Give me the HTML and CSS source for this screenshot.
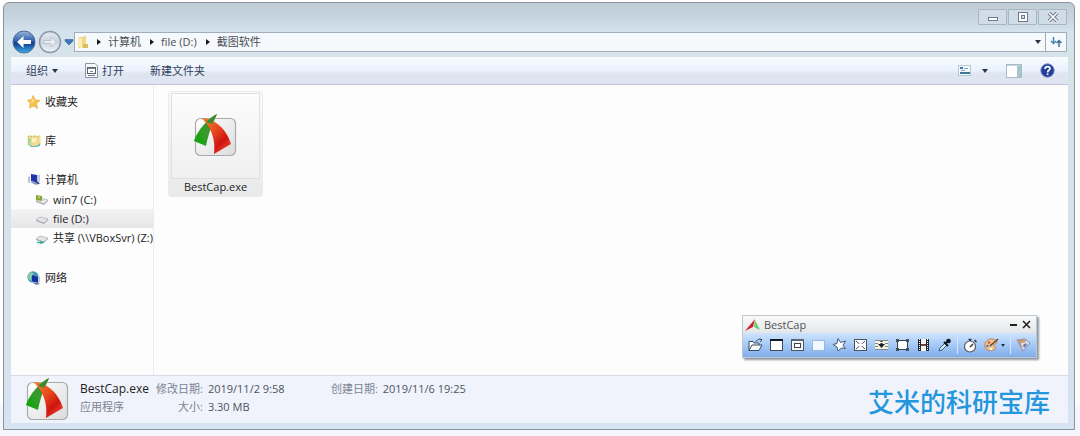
FILE: index.html
```html
<!DOCTYPE html>
<html lang="zh-CN">
<head>
  <meta charset="UTF-8">
  <title>截图软件</title>
  <link rel="stylesheet" href="styles.css">
</head>
<body>
  <!-- 公用图标 -->
  <svg class="defs" width="0" height="0" aria-hidden="true">
    <defs>
      <linearGradient id="green" x1="1" y1="0" x2="0" y2="1">
        <stop offset="0" stop-color="#197a1d"/>
        <stop offset=".5" stop-color="#3c9a30"/>
        <stop offset="1" stop-color="#00a800"/>
      </linearGradient>
      <linearGradient id="red" x1="0" y1="0" x2=".8" y2="1">
        <stop offset="0" stop-color="#f08a35"/>
        <stop offset=".45" stop-color="#e8481c"/>
        <stop offset=".75" stop-color="#cf1410"/>
        <stop offset="1" stop-color="#ee4a2c"/>
      </linearGradient>
      <linearGradient id="tile" x1="0" y1="0" x2="1" y2="1">
        <stop offset="0" stop-color="#fff"/>
        <stop offset="1" stop-color="#dcdcdc"/>
      </linearGradient>
      <linearGradient id="ball" x1="0" y1="0" x2="0" y2="1">
        <stop offset="0" stop-color="#9db6da"/>
        <stop offset=".45" stop-color="#2f5fae"/>
        <stop offset=".55" stop-color="#12398e"/>
        <stop offset="1" stop-color="#3cb4ee"/>
      </linearGradient>
      <linearGradient id="grayball" x1="0" y1="0" x2="0" y2="1">
        <stop offset="0" stop-color="#e3eaf1"/>
        <stop offset=".5" stop-color="#cbd5df"/>
        <stop offset="1" stop-color="#eef3f7"/>
      </linearGradient>
      <symbol id="logo" viewBox="0 0 44 44">
        <rect x="1.500" y="4.500" width="40" height="37" rx="5" fill="url(#tile)" stroke="#a9abad" stroke-width="1.200"/>
        <path d="M23 0C14 5 4 15 0 27L12 32C14 22 17 12 23 0Z" fill="url(#green)"/>
        <path d="M7 4C21 4 33 16 37 30L20 40C22 26 17 12 7 4Z" fill="url(#red)"/>
        <path d="M23 0C19 2 15 5 12 8L18 10Z" fill="#3f8a2c"/>
      </symbol>
      <symbol id="drive" viewBox="0 0 14 12">
        <path d="M1 7L5 4L13 6L9 10Z" fill="#e3e5e7" stroke="#aeb2b5" stroke-width=".8"/>
        <path d="M1 7V8L9 11L13 7V6L9 10Z" fill="#a4a8ac"/>
      </symbol>
    </defs>
  </svg>

  <main class="window">
    <header class="titlebar">
      <button class="win-btn" aria-label="最小化">
        <svg width="12" height="10" viewBox="0 0 12 10"><rect x="1.500" y="5.500" width="9" height="3" fill="#fff" stroke="#70798a"/></svg>
      </button>
      <button class="win-btn" aria-label="最大化">
        <svg width="12" height="10" viewBox="0 0 12 10"><rect x="1.500" y=".5" width="9" height="9" fill="#fff" stroke="#70798a"/><rect x="4.500" y="3.500" width="3" height="3" fill="#d5dde8" stroke="#70798a"/></svg>
      </button>
      <button class="win-btn" aria-label="关闭">
        <svg width="12" height="10" viewBox="0 0 12 10"><path d="M2 1L10 9M10 1L2 9" stroke="#70798a" stroke-width="3.600"/><path d="M2 1L10 9M10 1L2 9" stroke="#fff" stroke-width="1.700"/></svg>
      </button>
    </header>

    <!-- 地址栏 -->
    <div class="address-row">
      <div class="nav-buttons">
        <button aria-label="后退">
          <svg width="24" height="24" viewBox="0 0 24 24"><circle cx="12" cy="12" r="11" fill="url(#ball)" stroke="#4e6a94"/><path d="M5 12L11.500 6V10H19V14H11.500V18Z" fill="#fff"/></svg>
        </button>
        <button aria-label="前进">
          <svg width="24" height="24" viewBox="0 0 24 24"><circle cx="12" cy="12" r="10.500" fill="url(#grayball)" stroke="#8f9aa8" stroke-width="1.500"/><path d="M18.500 12L13 7V10.500H6V13.500H13V17Z" fill="#e9eef3" stroke="#b3bec9" stroke-width=".8"/></svg>
        </button>
        <button aria-label="最近浏览的位置">
          <svg width="10" height="8" viewBox="0 0 10 8"><path d="M1 1.500H9V3L5 7L1 3Z" fill="#3e77b8" stroke="#4a6f9e" stroke-width=".7"/></svg>
        </button>
      </div>
      <nav class="address">
        <svg width="11" height="14" viewBox="0 0 11 14"><path d="M1 2H6L7 1H9V9L11 10V13H1Z" fill="#f0d787"/><path d="M1 2L5 4V13L1 12Z" fill="#fbeeb5"/><path d="M6 9H11V13H6Z" fill="#dcbc62"/></svg>
        <span class="sep"></span>
        <a href="#">计算机</a>
        <span class="sep"></span>
        <a href="#">file (D:)</a>
        <span class="sep"></span>
        <a href="#">截图软件</a>
        <button class="history" aria-label="上一个位置"><span class="caret"></span></button>
        <button class="refresh" aria-label="刷新">
          <svg width="14" height="12" viewBox="0 0 14 12"><path d="M4.500 1V7M2 5L4.500 7.500L7 5" fill="none" stroke="#4d87ad" stroke-width="1.500"/><path d="M10 11V5M7.500 7L10 4.500L12.500 7" fill="none" stroke="#3a719d" stroke-width="1.500"/></svg>
        </button>
      </nav>
    </div>

    <!-- 工具栏 -->
    <div class="toolbar">
      <button class="organize">组织<span class="caret"></span></button>
      <button class="open">
        <svg width="13" height="15" viewBox="0 0 13 15"><path d="M.5 .5H10L12.500 3V14.500H.5Z" fill="#f6f8fb" stroke="#8a94a2"/><rect x="2.500" y="4.500" width="8" height="6" fill="#fff" stroke="#59636f"/><path d="M3 5.500H10M5 8.500H8M3 12.500H10" stroke="#7a8490"/></svg>
        打开
      </button>
      <button>新建文件夹</button>
      <button class="view" aria-label="更改视图">
        <svg width="14" height="11" viewBox="0 0 14 11"><rect x=".5" y=".5" width="12" height="10" fill="#f4fafc" stroke="#b5c9d4"/><path d="M2 3H5M2 8H12" stroke="#3d779b" stroke-width="2"/><path d="M6 3.500H10M3 5.500H7" stroke="#86a9be"/></svg>
        <span class="caret"></span>
      </button>
      <button aria-label="预览窗格">
        <svg width="16" height="14" viewBox="0 0 16 14"><rect x=".5" y=".5" width="15" height="13" fill="#fff" stroke="#a9bcc6"/><path d="M11 1H15V13H11Z" fill="#a6c4cc"/><path d="M1 1.500H15" stroke="#c5d6dd"/></svg>
      </button>
      <button aria-label="帮助">
        <svg width="15" height="15" viewBox="0 0 15 15"><circle cx="7.500" cy="7.500" r="6.700" fill="#233d9c" stroke="#7c8ec6"/><path d="M5 6C5 2.800 10 2.800 10 5.600C10 7.400 7.600 7.200 7.600 9.400M7.600 10.600V12" fill="none" stroke="#fff" stroke-width="1.700"/></svg>
      </button>
    </div>

    <div class="content">
      <!-- 导航窗格 -->
      <aside class="sidebar">
        <a class="node" href="#">
          <svg width="14" height="14" viewBox="0 0 14 14"><path d="M6 .5L8 4.800L13 5.500L9.500 8.500L10.500 13.500L6.500 11L2.500 12.800L3.200 8.500L.5 5.200L4.700 4.500Z" fill="#f8c34a" stroke="#e9a83a" stroke-width=".7"/><path d="M6 3L6.800 6L4 8Z" fill="#fff0b4"/></svg>
          收藏夹
        </a>
        <a class="node" href="#">
          <svg width="14" height="14" viewBox="0 0 14 14"><path d="M.5 2L3 1L5 2L8 1L10 2L13.500 1V11L10 12.500L5 13L.5 11Z" fill="#eddc91"/><path d="M1 4H4V11H1Z" fill="#a9d7a1"/><path d="M5 4H9V8H5Z" fill="#fff2bd"/><path d="M2 10C5 13 10 13 13 9V12L9 13H4Z" fill="#66b8c4"/><path d="M1 2.500H13" stroke="#b7a75c" stroke-dasharray="1 2"/></svg>
          库
        </a>
        <div class="group">
          <a class="node" href="#">
            <svg width="14" height="14" viewBox="0 0 14 14"><path d="M4 1L10 2V9L4 8Z" fill="#2136aa"/><path d="M10 2L13 1.500V9L10 9Z" fill="#c1cee4"/><path d="M1 4L3 3V10L1 9Z" fill="#b5c1d0"/><path d="M3 9L7 8L13 10L9 12Z" fill="#8995ba"/><path d="M6 7L10 9L12 11" fill="none" stroke="#2230a0" stroke-width="1.500"/></svg>
            计算机
          </a>
          <ul class="drives">
            <li><a href="#"><svg width="14" height="12" viewBox="0 0 14 12"><use href="#drive"/><path d="M1 1L7 2V7L1 6Z" fill="#7fa936"/><path d="M3 2L5 2.500V4.500L3 4Z" fill="#e3c06a"/></svg>win7 (C:)</a></li>
            <li class="selected"><a href="#"><svg width="14" height="12"><use href="#drive"/></svg>file (D:)</a></li>
            <li><a href="#"><svg width="14" height="12" viewBox="0 0 14 12"><use href="#drive"/><path d="M2 10.500H9M6 9V12" stroke="#3eae98" stroke-width="1.600"/></svg>共享 (\\VBoxSvr) (Z:)</a></li>
          </ul>
        </div>
        <a class="node" href="#">
          <svg width="14" height="14" viewBox="0 0 14 14"><circle cx="6" cy="6" r="5.700" fill="#4595bb"/><path d="M1 3L5 1L7 4L4 6L5 10L1 8Z" fill="#8ccca5"/><path d="M5 4L11 6V12L5 10Z" fill="#17309f"/><path d="M11 6L13 5V11L11 12Z" fill="#becbdc"/><path d="M6 12L10 11L13 13L9 14Z" fill="#77829f"/></svg>
          网络
        </a>
      </aside>

      <section class="files">
        <a class="file" href="#">
          <span class="thumb"><svg width="44" height="44"><use href="#logo"/></svg></span>
          <span>BestCap.exe</span>
        </a>

        <!-- 截图工具浮动窗 -->
        <div class="capture">
          <div class="capture-title">
            <svg width="15" height="12" viewBox="0 0 15 12"><path d="M10 0L8 8L0 12Z" fill="#cf2231"/><path d="M10 1L15 11L9 8Z" fill="#65ce65"/></svg>
            <span>BestCap</span>
            <button aria-label="最小化"><svg width="9" height="9" viewBox="0 0 9 9"><path d="M1 5H8" stroke="#222" stroke-width="2"/></svg></button>
            <button aria-label="关闭"><svg width="9" height="9" viewBox="0 0 9 9"><path d="M1 1L8 8M8 1L1 8" stroke="#222" stroke-width="1.600"/></svg></button>
          </div>
          <div class="capture-tools">
            <button aria-label="打开文件"><svg width="15" height="14" viewBox="0 0 15 14"><path d="M1 12.500V3.500H5L6 5H11V7M1 12.500L4 7H14L11 12.500Z" fill="#f7fafc" stroke="#3b4d60"/><path d="M8 4C9 1 12 1 14 2M11.500 .5L14 2L12 4" fill="none" stroke="#3b4d60"/></svg></button>
            <button aria-label="活动窗口"><svg width="15" height="14" viewBox="0 0 15 14"><rect x="1.500" y="1.500" width="12" height="11" fill="#fff" stroke="#3a4a5a"/><path d="M1 2H14" stroke="#101a24" stroke-width="2"/></svg></button>
            <button aria-label="窗口对象"><svg width="15" height="14" viewBox="0 0 15 14"><rect x="1.500" y="1.500" width="12" height="11" fill="#f7f7f7" stroke="#4b5665"/><path d="M1 2H14" stroke="#5c6570" stroke-width="2"/><rect x="4.500" y="5.500" width="6" height="4" fill="#fff" stroke="#38424e"/></svg></button>
            <button aria-label="矩形区域"><svg width="15" height="14" viewBox="0 0 15 14"><rect x="1.500" y="2.500" width="12" height="10" fill="#eff9ff" stroke="#6d93b0" stroke-dasharray="1 1"/></svg></button>
            <button aria-label="手绘区域"><svg width="15" height="14" viewBox="0 0 15 14"><path d="M6 .5L8.500 4.500L13.500 3L11 7.500L13.500 10.500L9.500 10L6 13L5 9L1 6.500L5 5.500Z" fill="#fff" stroke="#46596c"/></svg></button>
            <button aria-label="全屏"><svg width="15" height="14" viewBox="0 0 15 14"><rect x="1.500" y="1.500" width="12" height="11" fill="#fff" stroke="#455362"/><path d="M3 3L12 11M12 3L3 11" stroke="#4a5663"/><path d="M5 7L7.500 4.500L10 7L7.500 9.500Z" fill="#fff"/></svg></button>
            <button aria-label="滚动窗口"><svg width="15" height="14" viewBox="0 0 15 14"><path d="M1 2H14V12H1Z" fill="#f6f2dc"/><path d="M1 2.500H14M1 5.500H4M11 5.500H14M1 8.500H4M11 8.500H14M1 11.500H14" stroke="#7d868e"/><path d="M4 6H11L7.500 10Z" fill="#17222d"/><path d="M7.500 3V7" stroke="#17222d" stroke-width="2" stroke-dasharray="1 1"/></svg></button>
            <button aria-label="固定区域"><svg width="15" height="14" viewBox="0 0 15 14"><rect x="2.500" y="2.500" width="10" height="9" fill="#fff" stroke="#33424f"/><path d="M1 1H4V4H1ZM11 1H14V4H11ZM1 10H4V13H1ZM11 10H14V13H11Z" fill="#43525f"/></svg></button>
            <button aria-label="屏幕录像"><svg width="15" height="14" viewBox="0 0 15 14"><path d="M2 1H13V13H2Z" fill="#25292e"/><path d="M5 1H10V6H5ZM5 8H10V13H5Z" fill="#f5f5f5"/><path d="M3.500 1V13M11.500 1V13" stroke="#fff" stroke-dasharray="1 1"/><path d="M5 7H10" stroke="#b45d51"/></svg></button>
            <button aria-label="取色"><svg width="15" height="14" viewBox="0 0 15 14"><path d="M2 13L3 10L8 5L10 7L5 12Z" fill="#d8eaf2" stroke="#355d80"/><path d="M7 4L11 8M9 5L12 2" stroke="#11171e" stroke-width="2"/><circle cx="11.500" cy="3" r="2.300" fill="#11171e"/></svg></button>
            <span class="divider"></span>
            <button aria-label="延时"><svg width="15" height="15" viewBox="0 0 15 15"><circle cx="7" cy="8.500" r="5.500" fill="#fff" stroke="#53585e" stroke-width="1.200"/><path d="M5.500 1.500H8.500M7 1V3M7 9L10 6M11.500 2L13.500 4" stroke="#303840" stroke-width="1.500"/></svg></button>
            <button class="output" aria-label="输出"><svg width="15" height="14" viewBox="0 0 15 14"><path d="M7 1C3 1 0 5 1 9C2 13 8 14 11 11C13 9 9 9 10 7C11 5 13 6 13 4C12 2 10 1 7 1Z" fill="#f3c48f" stroke="#b98259"/><circle cx="5" cy="4.500" r="1.300" fill="#cf5142"/><circle cx="3.500" cy="8" r="1.300" fill="#4d7fb7"/><circle cx="7" cy="11" r="1.200" fill="#fff"/><path d="M14 1L6 8" stroke="#6b3e2c" stroke-width="1.500"/></svg><span class="caret"></span></button>
            <span class="divider"></span>
            <button aria-label="设置"><svg width="15" height="14" viewBox="0 0 15 14"><path d="M1 2L9 1L14 5L7 13Z" fill="#d9e1ef" stroke="#8e8aa6"/><path d="M1 2L9 1L10 4L5 5L7 13Z" fill="#c69a78"/><path d="M7 7L10 5L11 7L8 10Z" fill="#6776b5"/></svg></button>
          </div>
        </div>
      </section>
    </div>

    <!-- 细节窗格 -->
    <footer class="details">
      <svg width="44" height="44"><use href="#logo"/></svg>
      <dl class="info">
        <dt class="name">BestCap.exe</dt>
        <dd class="label">修改日期:</dd>
        <dd>2019/11/2 9:58</dd>
        <dd class="label">创建日期:</dd>
        <dd>2019/11/6 19:25</dd>
        <dt class="type">应用程序</dt>
        <dd class="label">大小:</dd>
        <dd>3.30 MB</dd>
      </dl>
      <div class="brand">艾米的科研宝库</div>
    </footer>
  </main>
</body>
</html>
```

FILE: styles.css
```css
* {
  box-sizing: border-box;
}
body {
  margin: 0;
  padding: 2px 5px 6px 3px;
  min-height: 100vh;
  display: flex;
  background: linear-gradient(#fff 0, #fff 400px, #f5f5fe 410px);
  font: 11px/16px "Open Sans", "Noto Sans CJK SC", sans-serif;
  color: #222;
}
.defs {
  position: absolute;
}
svg {
  display: block;
  flex: none;
}
a {
  color: inherit;
  text-decoration: none;
}
button {
  display: flex;
  align-items: center;
  padding: 0;
  border: 0;
  background: none;
  font: inherit;
  color: inherit;
}
.caret {
  border: 3px solid transparent;
  border-top: 4px solid #2b3444;
  border-bottom: 0;
}
.window {
  flex: 1;
  min-width: 0;
  display: flex;
  flex-direction: column;
  padding: 0 6px 6px 7px;
  border: 1px solid #8b939e;
  border-radius: 6px 6px 0 0;
  background: linear-gradient(#bfccd4 0, #c7d5e2 15px, #d5e3ee 30px, #d6e3e9 56px, #d6e3f0 100%);
}
.titlebar {
  display: flex;
  justify-content: flex-end;
  gap: 1px;
  height: 26px;
  padding: 6px 1px 4px;
}
.win-btn {
  width: 29px;
  justify-content: center;
  border: 1px solid #a9b5c1;
  border-radius: 1px;
  background: #d0dce7;
}

/* 地址栏 */
.address-row {
  display: flex;
  align-items: center;
  height: 26px;
  padding: 0 1px;
}
.nav-buttons {
  display: flex;
  align-items: center;
  gap: 2px;
  width: 62px;
}
.address {
  flex: 1;
  display: flex;
  align-items: center;
  height: 20px;
  padding-left: 2px;
  border: 1px solid #a1adb9;
  background: linear-gradient(#f4faff, #f7f8fa);
  color: #4a4e55;
}
.sep {
  margin: 0 7px 0 9px;
  border: 3px solid transparent;
  border-left: 4px solid #15181c;
  border-right: 0;
}
.history {
  margin-left: auto;
  padding: 0 4px;
}
.refresh {
  align-self: stretch;
  padding: 0 3px;
  border-left: 1px solid #a1adb9;
}

/* 工具栏 */
.toolbar {
  display: flex;
  align-items: center;
  height: 28px;
  margin-top: 2px;
  padding: 0 13px 0 15px;
  gap: 18px;
  border-bottom: 1px solid #c3c4d6;
  background: linear-gradient(#f8fcff, #ebf2fe 50%, #dfe6ee 60%, #dfe4f4);
  color: #2f3e5c;
}
.toolbar button {
  gap: 4px;
}
.toolbar .organize {
  margin-right: 9px;
}
.toolbar .open {
  margin-right: 8px;
}
.toolbar .view {
  gap: 10px;
  margin-left: auto;
}

.content {
  flex: 1;
  display: flex;
  background: #fdfdfe;
}

/* 导航窗格 */
.sidebar {
  width: 143px;
  display: flex;
  flex-direction: column;
  gap: 20px;
  padding-top: 7px;
  border-right: 1px solid #e9eef5;
  overflow: hidden;
}
.node {
  display: flex;
  align-items: center;
  gap: 4px;
  height: 19px;
  padding-left: 16px;
}
.drives {
  margin: 0;
  padding: 1px 0;
  list-style: none;
}
.drives a {
  display: flex;
  align-items: center;
  gap: 4px;
  height: 19px;
  padding-left: 24px;
  white-space: nowrap;
}
.drives .selected {
  background: linear-gradient(#f3f3f4, #e6e6e8);
}

/* 文件列表 */
.files {
  flex: 1;
  position: relative;
  padding: 6px 14px;
}
.file {
  display: flex;
  flex-direction: column;
  align-items: center;
  width: 95px;
  padding: 1px 2px;
  border: 1px solid #ebebec;
  border-radius: 3px;
  background: linear-gradient(#fafafa, #e9e9ea);
}
.thumb {
  display: flex;
  align-items: center;
  justify-content: center;
  align-self: stretch;
  height: 86px;
  border: 1px solid #e0e0e0;
  background: linear-gradient(#fcfcfc, #f0f0f1);
}

/* 截图工具浮动窗 */
.capture {
  position: absolute;
  right: 31px;
  bottom: 17px;
  width: 295px;
  border: 1px solid #bfc6cd;
  box-shadow: 2px 2px 2px #8b95a2;
  color: #555;
}
.capture-title {
  display: flex;
  align-items: center;
  height: 17px;
  padding: 0 5px 0 2px;
  gap: 4px;
  background: linear-gradient(#fafafa, #e3e6e8);
}
.capture-title span {
  margin-right: auto;
}
.capture-tools {
  display: flex;
  align-items: center;
  gap: 6px;
  height: 24px;
  padding: 0 5px;
  background: linear-gradient(#cfe4fd, #a5c9f7 50%, #82acea);
}
.divider {
  width: 1px;
  height: 18px;
  margin: 0 -1px;
  background: #d6e7fb;
}
.output .caret {
  margin-left: 2px;
  border-width: 3px 2px 0;
}

/* 细节窗格 */
.details {
  display: flex;
  align-items: center;
  height: 48px;
  padding: 0 18px 0 15px;
  border-top: 1px solid #d5dce6;
  background: #f0f3fc;
}
.info {
  display: grid;
  grid-template-columns: 71px auto 118px auto auto;
  column-gap: 5px;
  align-items: center;
  margin: 0 auto 0 10px;
  padding-bottom: 4px;
  line-height: 18px;
  white-space: nowrap;
  color: #4b5560;
}
.info dd {
  margin: 0;
}
.name {
  font-size: 12px;
  color: #222;
}
.info .label,
.type {
  color: #7b8490;
}
.info .label {
  text-align: right;
}
.brand {
  padding-top: 2px;
  font: 500 26px/32px "Noto Sans CJK SC", sans-serif;
  color: #2496dc;
}
```
